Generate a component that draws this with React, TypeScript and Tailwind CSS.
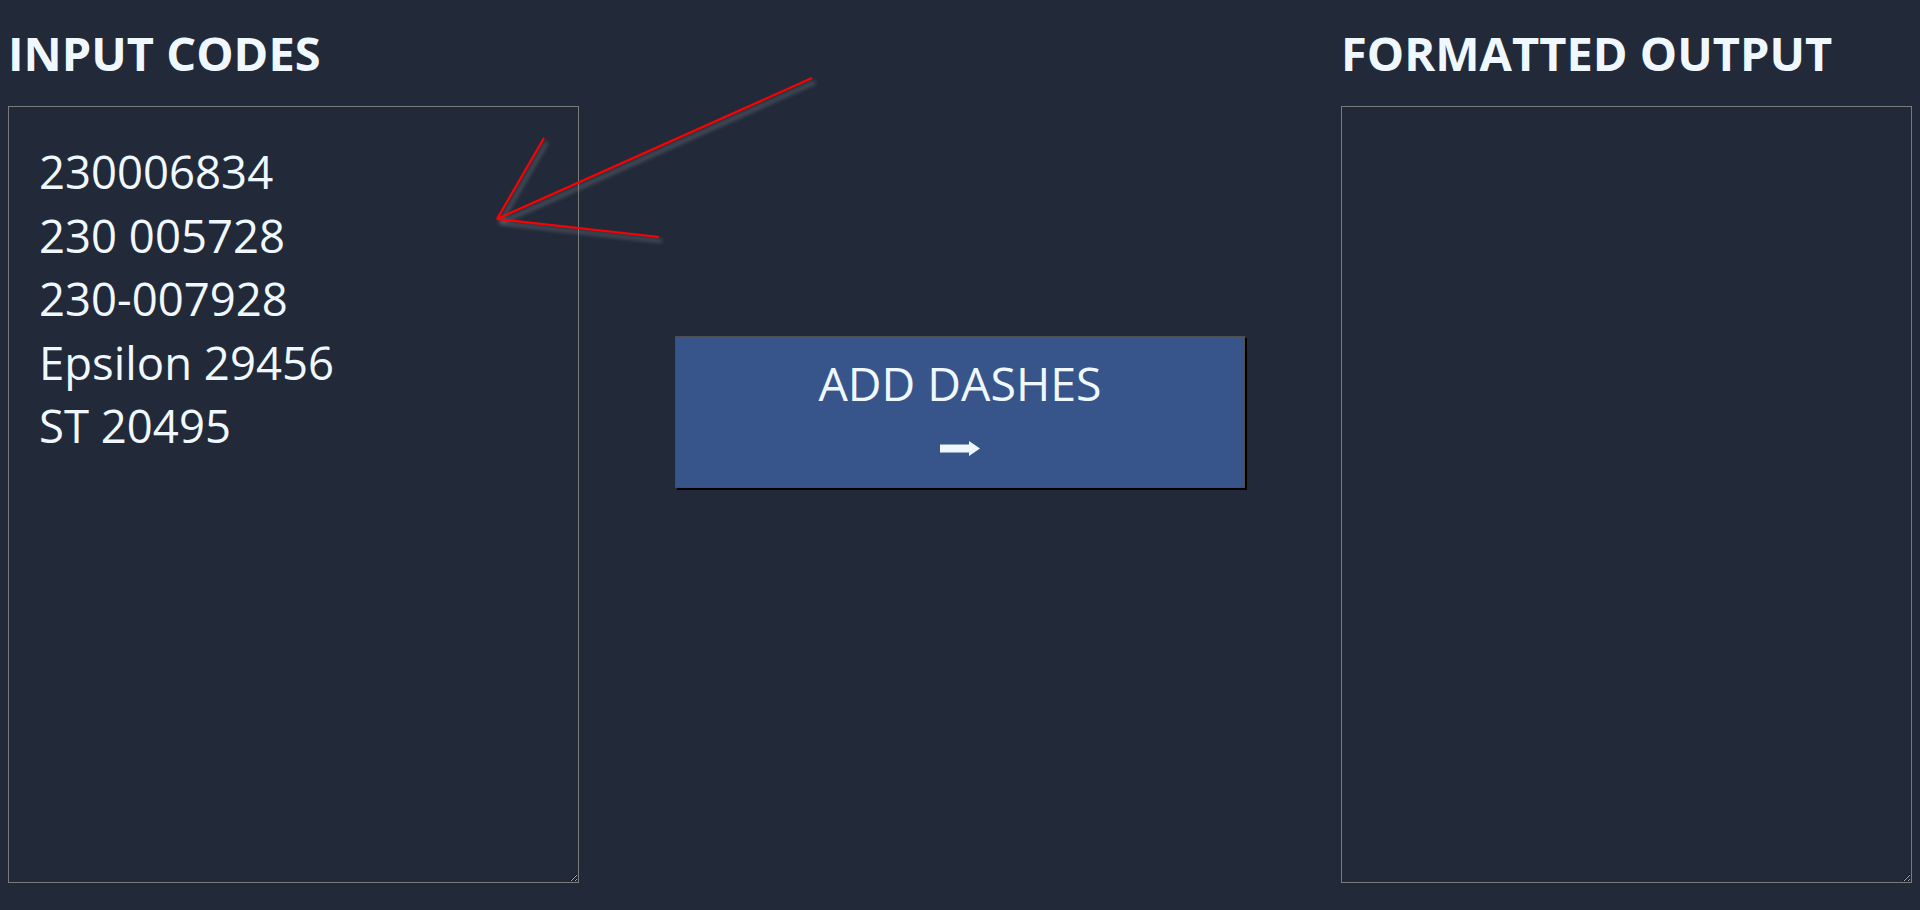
export default function App() {
  const input = "230006834\n230 005728\n230-007928\nEpsilon 29456\nST 20495";

  return (
    <div className="relative min-h-screen bg-[#222a3a] px-2 pt-[30px] font-['Open_Sans',sans-serif] text-[#f0f8ff]">
      <div className="flex justify-between">
        {/* Input column */}
        <div className="flex w-[571px] flex-col">
          <h1 className="h-[47px] text-[47px] font-bold leading-[47px]">INPUT CODES</h1>
          <textarea
            defaultValue={input}
            spellCheck={false}
            className="mt-[29px] h-[777px] w-full resize border border-[#7a7a7a] bg-transparent pl-[30px] pt-[33px] text-[45.5px] leading-[63.5px] text-[#f0f8ff] outline-none"
          />
        </div>

        {/* Button */}
        <div className="w-[570px] pt-[306px]">
          <button className="flex h-[152px] w-full flex-col items-center border border-[#4d4d4d] bg-[#37558a] pt-[14px] text-[#f0f8ff] shadow-[2px_2px_0_#000]">
            <span className="text-[46.5px] leading-[64px]">ADD DASHES</span>
            <svg width="40" height="15" viewBox="0 0 40 15" className="mt-[26px]">
              <path d="M0 3.5H29V0L40 7.5L29 15V11.5H0Z" fill="#f0f8ff" />
            </svg>
          </button>
        </div>

        {/* Output column */}
        <div className="flex w-[571px] flex-col">
          <h1 className="h-[47px] text-[47px] font-bold leading-[47px]">FORMATTED OUTPUT</h1>
          <textarea
            readOnly
            className="mt-[29px] h-[777px] w-full resize border border-[#7a7a7a] bg-transparent pl-[30px] pt-[33px] text-[45.5px] leading-[63.5px] text-[#f0f8ff] outline-none"
          />
        </div>
      </div>

      {/* red annotation arrow */}
      <svg
        width="1920"
        height="910"
        className="pointer-events-none absolute left-0 top-0 drop-shadow-[3px_4px_2px_rgba(150,150,150,0.6)]"
      >
        <g stroke="#ff0000" strokeWidth="2.2" fill="none" strokeLinecap="butt">
          <line x1="812" y1="78" x2="497" y2="219" />
          <line x1="544" y1="138" x2="497" y2="219" />
          <line x1="497" y1="219" x2="659" y2="237" />
        </g>
      </svg>
    </div>
  );
}
